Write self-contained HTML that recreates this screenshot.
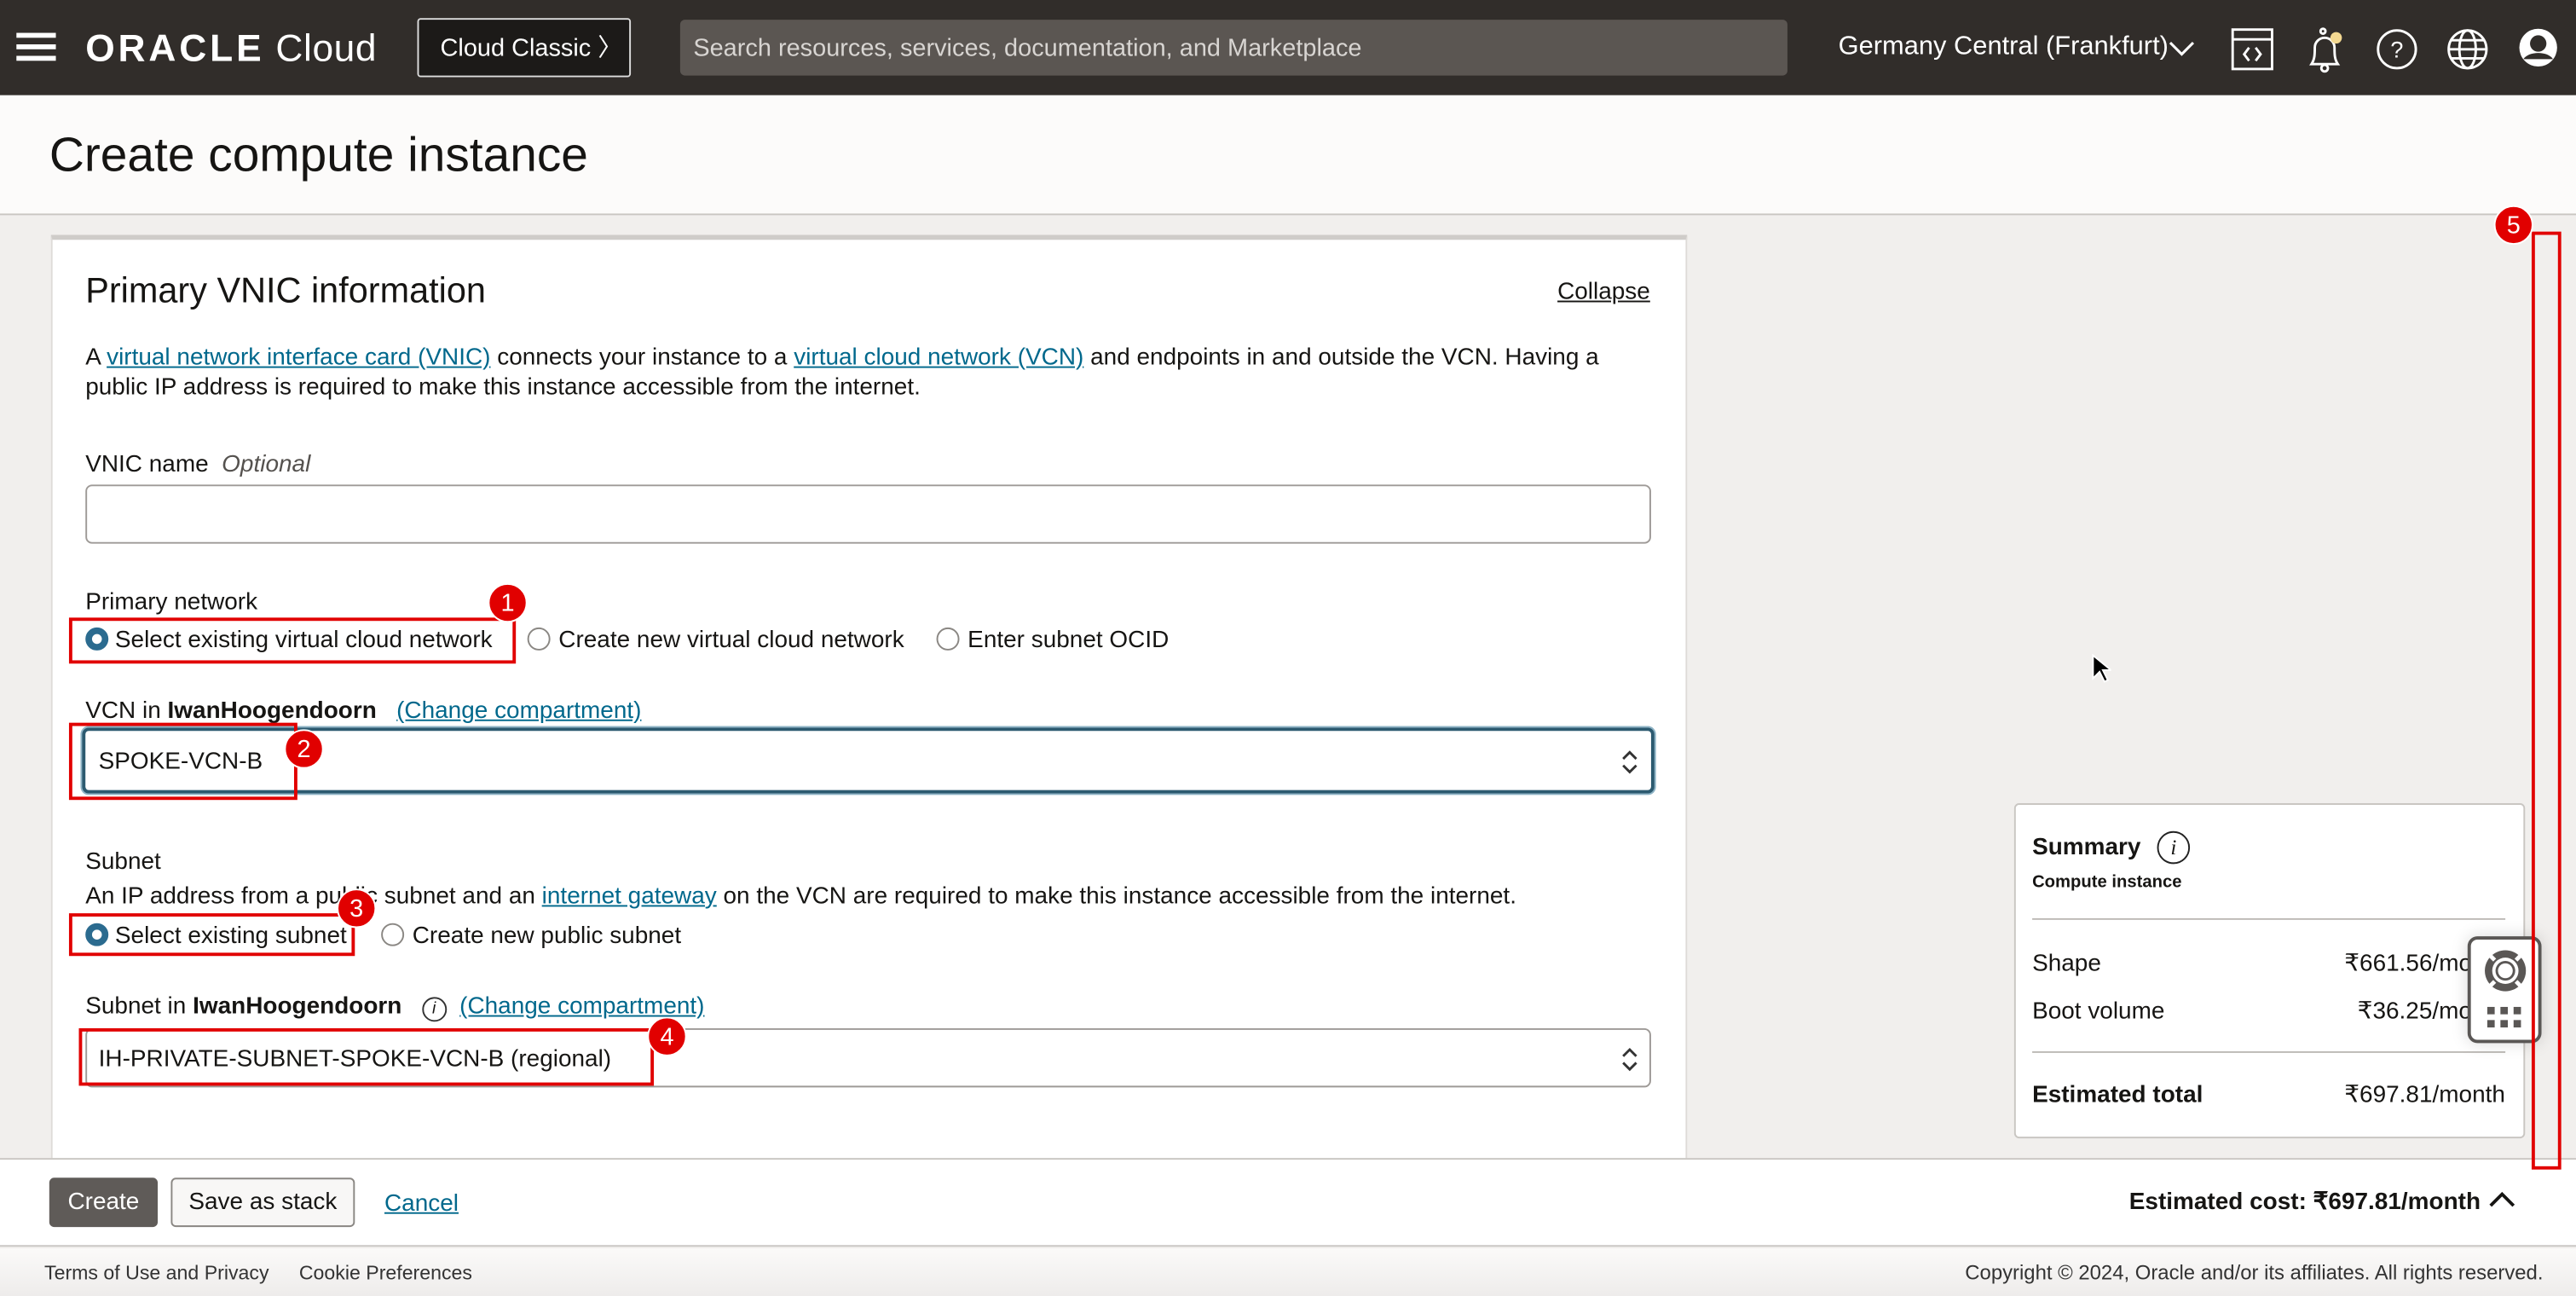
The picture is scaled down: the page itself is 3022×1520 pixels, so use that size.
<!DOCTYPE html>
<html><head><meta charset="utf-8">
<style>
*{margin:0;padding:0;box-sizing:border-box}
html,body{width:3022px;height:1520px;overflow:hidden;background:#f1efed}
#w{position:absolute;left:0;top:0;width:1568px;height:789px;transform:scale(1.9273,1.9265);transform-origin:0 0;font-family:"Liberation Sans",sans-serif;color:#161513;background:#f1efed}
.a{position:absolute}
.t{font-size:14.5px;white-space:nowrap;margin-top:1px}
a,.lnk{color:#00688c;text-decoration:underline}
.rb{position:absolute;width:14px;height:14px;border-radius:50%;border:1px solid #8a8783;background:#fff}
.rb.on{border:4px solid #2b6b8f;background:#fff}
.red{position:absolute;border:2.5px solid #e10000}
.bd{position:absolute;width:24px;height:24px;border-radius:50%;background:#e10000;color:#fff;font-size:15px;text-align:center;line-height:24px;border:1.5px solid #fff}
.sel{position:absolute;background:#fff;border:1px solid #9e9a97;border-radius:4px}
</style></head><body><div id="w">
<!-- header -->
<div class="a" style="left:0;top:0;width:1568px;height:58px;background:#312d2a"></div>
<div class="a" style="left:10px;top:20px;width:24px;height:2.5px;background:#fff"></div>
<div class="a" style="left:10px;top:27px;width:24px;height:2.5px;background:#fff"></div>
<div class="a" style="left:10px;top:34px;width:24px;height:2.5px;background:#fff"></div>
<div class="a" style="left:52px;top:16px;color:#fff;font-size:23px;letter-spacing:0.3px;white-space:nowrap"><span style="font-weight:bold;letter-spacing:2px">ORACLE</span> Cloud</div>
<div class="a" style="left:254px;top:11px;width:130px;height:36px;background:#1c1a18;border:1px solid #ddd;border-radius:2px;color:#fff;font-size:15px;line-height:35px;padding-left:13px">Cloud Classic 〉</div>
<div class="a" style="left:414px;top:12px;width:674px;height:34px;background:#5b5652;border-radius:3px;color:#d8d5d2;font-size:15px;line-height:35px;padding-left:8px">Search resources, services, documentation, and Marketplace</div>
<div class="a" style="left:1119px;top:20px;color:#fff;font-size:16px">Germany Central (Frankfurt)</div>
<svg class="a" style="left:1320px;top:24px" width="16" height="12"><path d="M1 2l7 7 7-7" stroke="#fff" stroke-width="1.6" fill="none"/></svg>
<svg class="a" style="left:1358px;top:17px" width="26" height="26" fill="none" stroke="#fff" stroke-width="1.5"><rect x="1" y="1" width="24" height="24"/><line x1="1" y1="7" x2="25" y2="7"/><path d="M11 12l-3 4 3 4M15 12l3 4-3 4"/></svg>
<svg class="a" style="left:1402px;top:15px" width="26" height="30" fill="none" stroke="#fff" stroke-width="1.5"><path d="M5 24c2-3 2-6 2-10a6 6 0 0112 0c0 4 0 7 2 10z"/><circle cx="12" cy="4" r="1.5"/><circle cx="13" cy="26.5" r="2"/><circle cx="20" cy="8" r="3.5" fill="#f3d891" stroke="none"/></svg>
<svg class="a" style="left:1446px;top:17px" width="26" height="26" fill="none" stroke="#fff" stroke-width="1.5"><circle cx="13" cy="13" r="11.5"/><text x="13" y="18" fill="#fff" stroke="none" font-size="14" text-anchor="middle" font-family="Liberation Sans">?</text></svg>
<svg class="a" style="left:1489px;top:17px" width="26" height="26" fill="none" stroke="#fff" stroke-width="1.5"><circle cx="13" cy="13" r="11.5"/><ellipse cx="13" cy="13" rx="5" ry="11.5"/><line x1="1.5" y1="13" x2="24.5" y2="13"/><line x1="3" y1="7.5" x2="23" y2="7.5"/><line x1="3" y1="18.5" x2="23" y2="18.5"/></svg>
<svg class="a" style="left:1533px;top:17px" width="26" height="26"><circle cx="12" cy="12" r="11.5" fill="#fff"/><circle cx="12" cy="9.5" r="5" fill="#312d2a"/><path d="M3 19c3-5 15-5 18 0" fill="#312d2a"/></svg>
<!-- title -->
<div class="a" style="left:0;top:58px;width:1568px;height:73px;background:#fcfbfa;border-bottom:1px solid #c9c6c2"></div>
<div class="a" style="left:30px;top:78px;font-size:29.5px;white-space:nowrap">Create compute instance</div>
<!-- card -->
<div class="a" style="left:31px;top:143px;width:996px;height:570px;background:#fff;border-top:3px solid #cfccc9;border-left:1px solid #dedbd8;border-right:1px solid #dedbd8"></div>
<div class="a" style="left:52px;top:165px;font-size:21.5px;white-space:nowrap">Primary VNIC information</div>
<div class="a t lnk" style="left:948px;top:169px;color:#161513">Collapse</div>
<div class="a t" style="left:52px;top:208px;line-height:18px">A <a>virtual network interface card (VNIC)</a> connects your instance to a <a>virtual cloud network (VCN)</a> and endpoints in and outside the VCN. Having a<br>public IP address is required to make this instance accessible from the internet.</div>
<div class="a t" style="left:52px;top:274px">VNIC name &nbsp;<i style="color:#55524f">Optional</i></div>
<div class="sel" style="left:52px;top:295px;width:953px;height:36px"></div>
<div class="a t" style="left:52px;top:358px">Primary network</div>
<div class="rb on" style="left:52px;top:382px"></div><div class="a t" style="left:70px;top:381px">Select existing virtual cloud network</div>
<div class="rb" style="left:321px;top:382px"></div><div class="a t" style="left:340px;top:381px">Create new virtual cloud network</div>
<div class="rb" style="left:570px;top:382px"></div><div class="a t" style="left:589px;top:381px">Enter subnet OCID</div>
<div class="a t" style="left:52px;top:424px">VCN in <b>IwanHoogendoorn</b> &nbsp;&nbsp;<a>(Change compartment)</a></div>
<div class="sel" style="left:50px;top:443px;width:957px;height:40px;border:2px solid #2c5a70;box-shadow:0 0 0 1px #8fb4c6"></div>
<div class="a t" style="left:60px;top:455px">SPOKE-VCN-B</div>
<svg class="a" style="left:986px;top:454px" width="12" height="20" fill="none" stroke="#333" stroke-width="1.5"><path d="M2 8l4-4 4 4M2 12l4 4 4-4"/></svg>
<div class="a t" style="left:52px;top:516px">Subnet</div>
<div class="a t" style="left:52px;top:537px">An IP address from a public subnet and an <a>internet gateway</a> on the VCN are required to make this instance accessible from the internet.</div>
<div class="rb on" style="left:52px;top:562px"></div><div class="a t" style="left:70px;top:561px">Select existing subnet</div>
<div class="rb" style="left:232px;top:562px"></div><div class="a t" style="left:251px;top:561px">Create new public subnet</div>
<div class="a t" style="left:52px;top:604px">Subnet in <b>IwanHoogendoorn</b> &nbsp;&nbsp;<span style="display:inline-block;width:15px;height:15px;border:1px solid #333;border-radius:50%;font-size:10px;text-align:center;line-height:13px;font-style:italic">i</span> &nbsp;<a>(Change compartment)</a></div>
<div class="sel" style="left:52px;top:626px;width:953px;height:36px"></div>
<div class="a t" style="left:60px;top:636px">IH-PRIVATE-SUBNET-SPOKE-VCN-B (regional)</div>
<svg class="a" style="left:986px;top:635px" width="12" height="20" fill="none" stroke="#333" stroke-width="1.5"><path d="M2 8l4-4 4 4M2 12l4 4 4-4"/></svg>
<!-- summary -->
<div class="a" style="left:1226px;top:489px;width:311px;height:204px;background:#fff;border:1px solid #c9c6c2;border-radius:3px"></div>
<div class="a" style="left:1237px;top:508px;font-size:14.5px;font-weight:bold">Summary</div>
<div class="a" style="left:1313px;top:506px;width:20px;height:20px;border:1px solid #222;border-radius:50%;font-size:13px;font-style:italic;text-align:center;line-height:18px;font-family:'Liberation Serif',serif">i</div>
<div class="a" style="left:1237px;top:531px;font-size:10.5px;font-weight:bold">Compute instance</div>
<div class="a" style="left:1237px;top:559px;width:288px;height:1px;background:#bdbab6"></div>
<div class="a t" style="left:1237px;top:578px">Shape</div><div class="a t" style="left:1427px;top:578px">₹661.56/mo</div>
<div class="a t" style="left:1237px;top:607px">Boot volume</div><div class="a t" style="left:1435px;top:607px">₹36.25/mo</div>
<div class="a" style="left:1237px;top:640px;width:288px;height:1px;background:#bdbab6"></div>
<div class="a t" style="left:1237px;top:658px;font-weight:bold">Estimated total</div><div class="a t" style="left:1427px;top:658px">₹697.81/month</div>
<div class="a" style="left:1502px;top:570px;width:45px;height:65px;background:#fff;border:2.5px solid #5a5755;border-radius:6px;box-shadow:0 0 10px rgba(0,0,0,.15)"></div>
<svg class="a" style="left:1510px;top:576px" width="30" height="30"><circle cx="15" cy="15" r="12.5" fill="#5a5755"/><circle cx="15" cy="15" r="8" fill="#fff"/><circle cx="15" cy="15" r="6" fill="#5a5755"/><circle cx="15" cy="15" r="4.5" fill="#fff"/><g stroke="#fff" stroke-width="2.5"><line x1="8.5" y1="8.5" x2="5" y2="5"/><line x1="21.5" y1="8.5" x2="25" y2="5"/><line x1="8.5" y1="21.5" x2="5" y2="25"/><line x1="21.5" y1="21.5" x2="25" y2="25"/></g></svg>
<svg class="a" style="left:1513px;top:612px" width="22" height="16" fill="#5a5755"><rect x="1" y="1" width="4.5" height="4.5"/><rect x="9" y="1" width="4.5" height="4.5"/><rect x="17" y="1" width="4.5" height="4.5"/><rect x="1" y="9" width="4.5" height="4.5"/><rect x="9" y="9" width="4.5" height="4.5"/><rect x="17" y="9" width="4.5" height="4.5"/></svg>
<!-- cursor -->
<svg class="a" style="left:1273px;top:398px" width="12" height="18"><path d="M1 1v14l4-4 3 6 2-1-3-6h5z" fill="#000" stroke="#fff" stroke-width="1"/></svg>
<!-- bottom bar -->
<div class="a" style="left:0;top:705px;width:1568px;height:54px;background:#fff;border-top:1px solid #c9c6c2;border-bottom:1px solid #c9c6c2"></div>
<div class="a" style="left:30px;top:717px;width:66px;height:30px;background:#5f5b58;border-radius:3px;color:#fff;font-size:14.5px;text-align:center;line-height:31px">Create</div>
<div class="a" style="left:104px;top:717px;width:112px;height:30px;border:1px solid #8a8783;border-radius:3px;font-size:14.5px;text-align:center;line-height:29px;background:#f8f7f6">Save as stack</div>
<div class="a t lnk" style="left:234px;top:724px">Cancel</div>
<div class="a" style="left:1296px;top:724px;font-size:14.5px;font-weight:bold">Estimated cost: ₹697.81/month</div>
<svg class="a" style="left:1515px;top:725px" width="16" height="12"><path d="M1 9l7-7 7 7" stroke="#161513" stroke-width="2" fill="none"/></svg>
<!-- footer -->
<div class="a" style="left:0;top:760px;width:1568px;height:29px;background:linear-gradient(#fbfaf9,#eeeceb)"></div>
<div class="a" style="left:27px;top:768px;font-size:12px;color:#333;white-space:nowrap">Terms of Use and Privacy <span style="margin-left:15px">Cookie Preferences</span></div>
<div class="a" style="right:20px;top:768px;font-size:12.4px;color:#333;white-space:nowrap">Copyright © 2024, Oracle and/or its affiliates. All rights reserved.</div>
<!-- annotations -->
<div class="red" style="left:42px;top:376px;width:272px;height:28px"></div><div class="bd" style="left:297px;top:355px">1</div>
<div class="red" style="left:42px;top:440px;width:139px;height:47px"></div><div class="bd" style="left:173px;top:444px">2</div>
<div class="red" style="left:42px;top:556px;width:174px;height:26px"></div><div class="bd" style="left:205px;top:541px">3</div>
<div class="red" style="left:48px;top:626px;width:350px;height:35px"></div><div class="bd" style="left:394px;top:619px">4</div>
<div class="red" style="left:1541px;top:141px;width:18px;height:571px"></div><div class="bd" style="left:1518px;top:125px">5</div>
</div></body></html>
